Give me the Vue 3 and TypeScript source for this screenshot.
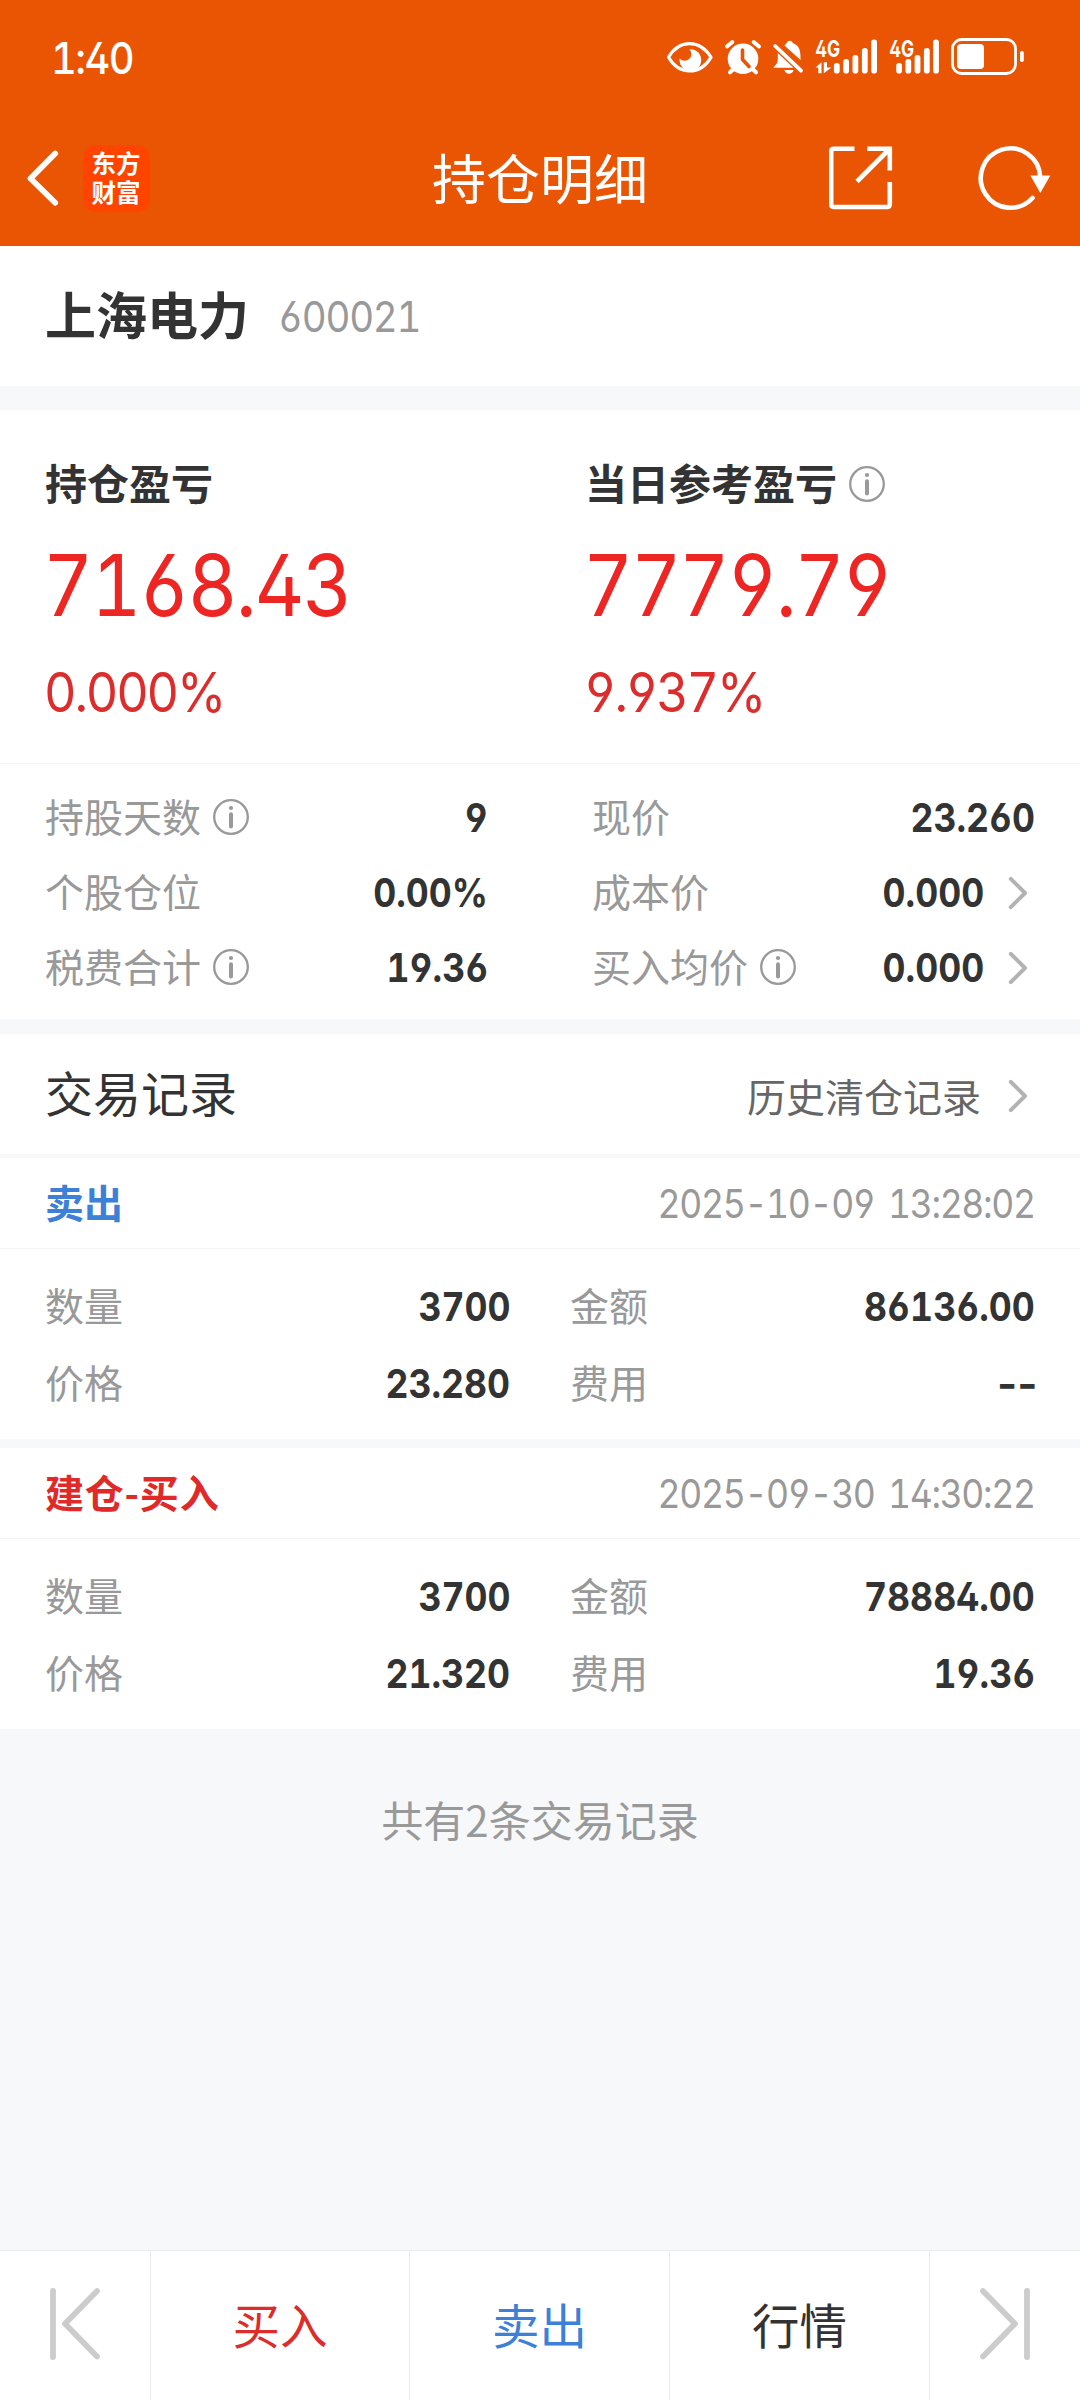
<script setup lang="ts">
interface Cell {
  label: string
  value: string
  info?: boolean
  link?: boolean
}

interface Trade {
  kind: 'sell' | 'buy'
  title: string
  time: string
  cells: Cell[]
}

const summary = [
  { label: '持仓盈亏', amount: '7168.43', percent: '0.000%', info: false },
  { label: '当日参考盈亏', amount: '7779.79', percent: '9.937%', info: true },
]

const stats: Cell[] = [
  { label: '持股天数', value: '9', info: true },
  { label: '现价', value: '23.260' },
  { label: '个股仓位', value: '0.00%' },
  { label: '成本价', value: '0.000', link: true },
  { label: '税费合计', value: '19.36', info: true },
  { label: '买入均价', value: '0.000', info: true, link: true },
]

const trades: Trade[] = [
  {
    kind: 'sell',
    title: '卖出',
    time: '2025-10-09 13:28:02',
    cells: [
      { label: '数量', value: '3700' },
      { label: '金额', value: '86136.00' },
      { label: '价格', value: '23.280' },
      { label: '费用', value: '--' },
    ],
  },
  {
    kind: 'buy',
    title: '建仓-买入',
    time: '2025-09-30 14:30:22',
    cells: [
      { label: '数量', value: '3700' },
      { label: '金额', value: '78884.00' },
      { label: '价格', value: '21.320' },
      { label: '费用', value: '19.36' },
    ],
  },
]

const signalBars = [
  { x: 0, y: 63 },
  { x: 9.3, y: 59 },
  { x: 18.6, y: 55 },
  { x: 28, y: 48 },
  { x: 37.3, y: 39.5 },
]
</script>

<template>
  <div class="page">
    <header class="top">
      <div class="status">
        <span class="clock num">1:40</span>
        <svg class="status-icons" width="370" height="46" viewBox="660 34 370 46" fill="#fff">
          <path d="M668.5 57.3C679 39 700 39 711 57.3C700 75.5 679 75.5 668.5 57.3Z" fill="none" stroke="#fff" stroke-width="3.2" stroke-linejoin="round" />
          <circle cx="690.4" cy="60" r="10.8" />
          <circle cx="684.6" cy="54" r="6.8" fill="#ea5504" />
          <circle cx="743" cy="58.8" r="15.3" />
          <path d="M727 46.5L732.3 42M753.7 42L759 46.5M733.5 69L730 72.3M752.5 69L756 72.3" stroke="#fff" stroke-width="4" stroke-linecap="round" />
          <path d="M742.5 50V59.5L749 66.5" fill="none" stroke="#ea5504" stroke-width="3.6" stroke-linecap="round" stroke-linejoin="round" />
          <path d="M784.5 45.5C786 43.5 787 43 787.5 41.6C789 40.6 790.5 40.6 792 41.6C792.5 43 793.5 43.5 795 44.3C800 47 800.5 52 800.5 60Z" />
          <path d="M777.8 53L793.5 67.8H773.5C774.5 65.5 777.5 64.5 777.8 60Z" />
          <path d="M784.5 70H793.5C792.5 75 785.5 75 784.5 70Z" />
          <path d="M775.2 46L801 70.7" stroke="#fff" stroke-width="3.8" stroke-linecap="round" />
          <text class="net" x="815.2" y="57" textLength="25" lengthAdjust="spacingAndGlyphs">4G</text>
          <path d="M815.5 67.5L821.5 62.3V73.2H818.3V67.5ZM823.8 62.3H827V67.5H831.5L823.8 73.2Z" />
          <rect v-for="bar in signalBars" :key="'a' + bar.x" :x="833.9 + bar.x" :y="bar.y" width="5.8" :height="73.5 - bar.y" rx="2.8" />
          <text class="net" x="889.2" y="57" textLength="25" lengthAdjust="spacingAndGlyphs">4G</text>
          <rect v-for="bar in signalBars" :key="'b' + bar.x" :x="896.2 + bar.x * 0.99" :y="bar.y" width="5.8" :height="73.5 - bar.y" rx="2.8" />
          <rect x="952.5" y="39.5" width="63" height="34" rx="9" fill="none" stroke="#fff" stroke-width="2.8" />
          <rect x="957" y="44" width="27" height="25" rx="4" />
          <rect x="1020" y="51" width="3.8" height="11" rx="1.8" />
        </svg>
      </div>
      <nav class="nav">
        <div class="nav-side">
          <svg width="34" height="60" viewBox="0 0 34 60" fill="none" stroke="#fff" stroke-width="5.8" stroke-linecap="round" stroke-linejoin="round">
            <path d="M29.2 5.5L4.5 30.5L29.2 54.8" />
          </svg>
          <div class="brand"><span>东方财富</span></div>
        </div>
        <h1 class="zh">持仓明细</h1>
        <div class="nav-side nav-right">
          <svg width="64" height="64" viewBox="0 0 64 64" fill="none" stroke="#fff" stroke-width="4.6">
            <path d="M25.5 2.8H5Q2.2 2.8 2.2 5.6V58.2Q2.2 61 5 61H58Q60.8 61 60.8 58.2V36M38.2 2.8H60.8V24.5M28 35.5L60 3.5" />
          </svg>
          <svg width="74" height="66" viewBox="0 0 74 66" fill="none" stroke="#fff" stroke-width="4.6" stroke-linecap="round">
            <path d="M62.2 32A29.7 29.7 0 1 0 54.5 53" />
            <path d="M52.4 30.5H72.3L62.3 48Z" fill="#fff" stroke="none" />
          </svg>
        </div>
      </nav>
    </header>

    <section class="stock">
      <h2 class="zh">上海电力</h2>
      <span class="code num">600021</span>
    </section>

    <section class="summary">
      <div v-for="item in summary" :key="item.label" class="profit">
        <div class="profit-title">
          <span class="zh">{{ item.label }}</span>
          <svg v-if="item.info" class="info" width="36" height="36" viewBox="0 0 36 36"><circle cx="18" cy="18" r="16.8" /><circle class="dot" cx="18" cy="9" r="2.1" /><path d="M18 15.2V27.5" /></svg>
        </div>
        <div class="amount num">{{ item.amount }}</div>
        <div class="percent num">{{ item.percent }}</div>
      </div>
    </section>

    <section class="stats">
      <div v-for="cell in stats" :key="cell.label" class="cell">
        <span class="label zh">{{ cell.label }}</span>
        <svg v-if="cell.info" class="info" width="36" height="36" viewBox="0 0 36 36"><circle cx="18" cy="18" r="16.8" /><circle class="dot" cx="18" cy="9" r="2.1" /><path d="M18 15.2V27.5" /></svg>
        <span class="value num">{{ cell.value }}</span>
        <svg v-if="cell.link" class="chevron" width="20" height="34" viewBox="0 0 20 34"><path d="M2.8 2.8L17 17L2.8 31.2" /></svg>
      </div>
    </section>

    <section class="records">
      <h3 class="zh">交易记录</h3>
      <a class="history"><span class="zh">历史清仓记录</span><svg class="chevron" width="20" height="34" viewBox="0 0 20 34"><path d="M2.8 2.8L17 17L2.8 31.2" /></svg></a>
    </section>

    <section v-for="trade in trades" :key="trade.time" class="trade">
      <div class="trade-head">
        <span class="trade-title zh" :class="trade.kind">{{ trade.title }}</span>
        <time class="num">{{ trade.time }}</time>
      </div>
      <div class="trade-body">
        <div v-for="cell in trade.cells" :key="cell.label" class="cell">
          <span class="label zh">{{ cell.label }}</span>
          <span class="value num" :class="{ empty: cell.value === '--' }">{{ cell.value }}</span>
        </div>
      </div>
    </section>

    <p class="total zh">共有2条交易记录</p>

    <footer class="actions">
      <button class="step">
        <svg width="50" height="74" viewBox="0 0 50 74"><path d="M3 4V70M47 4L15 36.7L47 69.5" /></svg>
      </button>
      <button class="buy"><span class="zh">买入</span></button>
      <button class="sell"><span class="zh">卖出</span></button>
      <button><span class="zh">行情</span></button>
      <button class="step">
        <svg width="50" height="74" viewBox="0 0 50 74"><path d="M47 4V70M3 4L35 36.7L3 69.5" /></svg>
      </button>
    </footer>
  </div>
</template>

<style>
body {
  margin: 0;
}
</style>

<style scoped>
.page {
  display: flex;
  flex-direction: column;
  width: 1080px;
  height: 2400px;
  overflow: hidden;
  background: #f6f8fa;
  color: #333;
  font-family: 'Noto Sans CJK SC', sans-serif;
}

.page * {
  box-sizing: border-box;
}

h1,
h2,
h3,
p {
  margin: 0;
  font-weight: 400;
}

.zh {
  padding-bottom: 0.11em;
  line-height: 1;
  white-space: nowrap;
}

.num {
  display: block;
  font-family: Inter, sans-serif;
  font-feature-settings: 'tnum', 'cv02', 'cv03', 'cv04';
  font-weight: 440;
  line-height: 1;
  white-space: nowrap;
  transform: scaleX(0.905);
  transform-origin: left center;
}

.top {
  height: 246px;
  background: #ea5504;
  color: #fff;
}

.status {
  display: flex;
  align-items: center;
  justify-content: space-between;
  height: 114px;
  padding: 0 50px 0 51px;
}

.clock {
  padding-top: 1px;
  font-size: 44px;
  font-weight: 500;
  letter-spacing: -0.038em;
}

.net {
  font: 700 23px Inter, sans-serif;
  font-feature-settings: 'cv02';
}

.nav {
  display: flex;
  align-items: center;
  justify-content: space-between;
  height: 132px;
  padding: 0 28px 4px 26px;
}

.nav-side {
  display: flex;
  align-items: center;
  gap: 23px;
  width: 260px;
}

.nav-right {
  justify-content: flex-end;
  gap: 85px;
}

.nav h1 {
  padding: 3px 0 0.11em 2px;
  font-size: 54px;
}

.brand {
  display: flex;
  align-items: center;
  justify-content: center;
  width: 67px;
  height: 67px;
  padding-bottom: 3px;
  border-radius: 13px;
  background: #ff4400;
  font-size: 24.5px;
  font-weight: 700;
  line-height: 29px;
}

.brand span {
  width: 50px;
}

.stock {
  display: flex;
  align-items: center;
  gap: 29px;
  height: 140px;
  padding: 0 45px;
  background: #fff;
}

.stock h2 {
  font-size: 51px;
  font-weight: 700;
}

.code {
  padding-top: 2px;
  color: #999;
  font-size: 42.5px;
  letter-spacing: -0.032em;
}

.summary {
  display: flex;
  height: 354px;
  margin-top: 24px;
  padding: 50px 0 0 45px;
  border-bottom: 1px solid #f5f5f5;
  background: #fff;
}

.profit {
  flex: none;
  width: 540px;
}

.profit-title {
  display: flex;
  align-items: center;
  gap: 12px;
  height: 50px;
  font-size: 42px;
  font-weight: 700;
}

.profit-title .zh {
  margin-top: -2px;
}

.amount {
  margin: 33px 0 0 -2px;
  color: #ed2624;
  font-size: 85.5px;
  letter-spacing: -0.026em;
}

.percent {
  margin: 35px 0 0 -1px;
  color: #dc2c2c;
  font-size: 55.5px;
  letter-spacing: -0.043em;
}

.info {
  flex: none;
  margin-top: -2px;
  fill: none;
  stroke: #999;
  stroke-width: 2.3;
}

.info path {
  stroke-width: 4;
  stroke-linecap: round;
}

.info .dot {
  fill: #999;
  stroke: none;
}

.chevron {
  flex: none;
  fill: none;
  stroke: #b3b3b3;
  stroke-width: 4;
  stroke-linecap: round;
  stroke-linejoin: round;
}

.stats {
  display: grid;
  grid-template-columns: 443px 443px;
  grid-auto-rows: 75px;
  column-gap: 104px;
  height: 255px;
  padding: 16px 45px 0;
  background: #fff;
}

.cell {
  display: flex;
  align-items: center;
}

.label {
  color: #999;
  font-size: 39px;
}

.cell .info {
  margin-left: 12px;
}

.value {
  margin-left: auto;
  font-size: 40px;
  font-weight: 700;
  transform: scaleX(0.89);
  transform-origin: right center;
}

.value.empty {
  margin-right: -2px;
  font-feature-settings: normal;
  transform: scaleX(1.08);
}

.cell .chevron {
  margin: 0 7px 0 24px;
}

.records {
  display: flex;
  align-items: center;
  justify-content: space-between;
  height: 120px;
  margin-top: 15px;
  padding: 0 52px 0 45px;
  background: #fff;
}

.records h3 {
  font-size: 48px;
}

.history {
  display: flex;
  align-items: center;
  gap: 27px;
  padding-top: 4px;
  color: #666;
  font-size: 39px;
}

.history .zh {
  padding-top: 3px;
}

.trade {
  height: 281px;
  margin-top: 9px;
  background: #fff;
}

.records + .trade {
  margin-top: 4px;
}

.trade-head {
  display: flex;
  align-items: center;
  justify-content: space-between;
  height: 91px;
  padding: 2px 45px 0;
  border-bottom: 1px solid #f5f5f5;
}

.trade-title {
  font-size: 39px;
  font-weight: 700;
}

.trade-title.sell {
  color: #3c80d8;
}

.trade-title.buy {
  color: #e02a2a;
  letter-spacing: 0.8px;
}

.trade-head time {
  color: #999;
  font-size: 40px;
  letter-spacing: -0.039em;
  word-spacing: 6px;
  transform: scaleX(0.89);
  transform-origin: right center;
}

.trade-body {
  display: grid;
  grid-template-columns: 465px 465px;
  grid-auto-rows: 77px;
  column-gap: 60px;
  padding: 19px 45px 0;
}

.total {
  margin-top: 69px;
  color: #999;
  font-size: 42px;
  text-align: center;
}

.actions {
  display: grid;
  grid-template-columns: 151px 259px 260px 260px 150px;
  height: 150px;
  margin-top: auto;
  border-top: 1px solid #e9ecef;
  background: #fff;
}

.actions button {
  display: flex;
  align-items: center;
  justify-content: center;
  padding: 1px 0 0;
  border: 0;
  border-right: 1px solid #e9ecef;
  background: none;
  color: #333;
  font: 400 47.5px 'Noto Sans CJK SC', sans-serif;
}

.actions button:last-child {
  border-right: 0;
}

.actions .buy {
  color: #dc2c2c;
}

.actions .sell {
  color: #3c80d8;
}

.actions .step {
  padding: 0 0 3px;
}

.step svg {
  fill: none;
  stroke: #ccc;
  stroke-width: 5.8;
  stroke-linecap: round;
  stroke-linejoin: round;
}
</style>
